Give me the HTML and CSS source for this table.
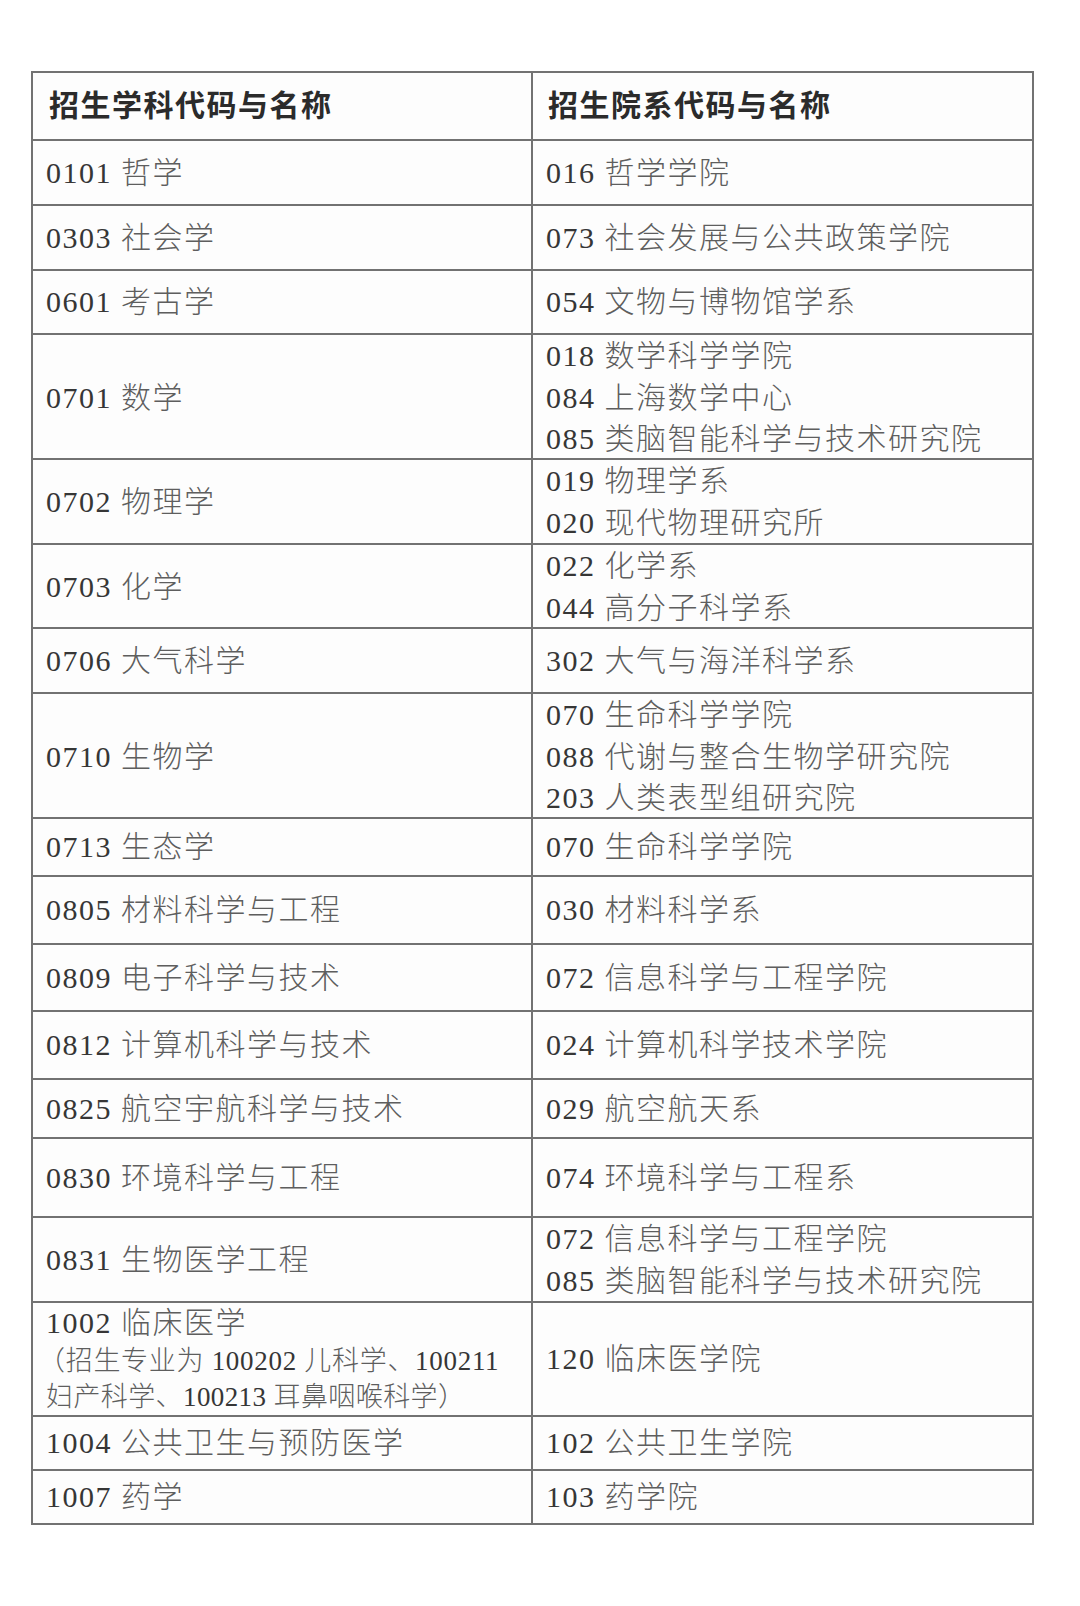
FILE: index.html
```html
<!DOCTYPE html>
<html lang="zh-CN">
<head>
<meta charset="utf-8">
<title>招生学科与院系</title>
<link rel="stylesheet" href="styles.css">
</head>
<body>
<div class="page">
  <div class="table">
    <div class="row head h66">
      <div class="cell left"><div class="line">招生学科代码与名称</div></div>
      <div class="cell right"><div class="line">招生院系代码与名称</div></div>
    </div>
    <div class="row h65">
      <div class="cell left"><div class="line"><span class="code">0101</span> 哲学</div></div>
      <div class="cell right"><div class="line"><span class="code">016</span> 哲学学院</div></div>
    </div>
    <div class="row h65">
      <div class="cell left"><div class="line"><span class="code">0303</span> 社会学</div></div>
      <div class="cell right"><div class="line"><span class="code">073</span> 社会发展与公共政策学院</div></div>
    </div>
    <div class="row h64">
      <div class="cell left"><div class="line"><span class="code">0601</span> 考古学</div></div>
      <div class="cell right"><div class="line"><span class="code">054</span> 文物与博物馆学系</div></div>
    </div>
    <div class="row h125">
      <div class="cell left"><div class="line"><span class="code">0701</span> 数学</div></div>
      <div class="cell right">
        <div class="line"><span class="code">018</span> 数学科学学院</div>
        <div class="line"><span class="code">084</span> 上海数学中心</div>
        <div class="line"><span class="code">085</span> 类脑智能科学与技术研究院</div>
      </div>
    </div>
    <div class="row h85">
      <div class="cell left"><div class="line"><span class="code">0702</span> 物理学</div></div>
      <div class="cell right">
        <div class="line"><span class="code">019</span> 物理学系</div>
        <div class="line"><span class="code">020</span> 现代物理研究所</div>
      </div>
    </div>
    <div class="row h84">
      <div class="cell left"><div class="line"><span class="code">0703</span> 化学</div></div>
      <div class="cell right">
        <div class="line"><span class="code">022</span> 化学系</div>
        <div class="line"><span class="code">044</span> 高分子科学系</div>
      </div>
    </div>
    <div class="row h65">
      <div class="cell left"><div class="line"><span class="code">0706</span> 大气科学</div></div>
      <div class="cell right"><div class="line"><span class="code">302</span> 大气与海洋科学系</div></div>
    </div>
    <div class="row h125">
      <div class="cell left"><div class="line"><span class="code">0710</span> 生物学</div></div>
      <div class="cell right">
        <div class="line"><span class="code">070</span> 生命科学学院</div>
        <div class="line"><span class="code">088</span> 代谢与整合生物学研究院</div>
        <div class="line"><span class="code">203</span> 人类表型组研究院</div>
      </div>
    </div>
    <div class="row h58">
      <div class="cell left"><div class="line"><span class="code">0713</span> 生态学</div></div>
      <div class="cell right"><div class="line"><span class="code">070</span> 生命科学学院</div></div>
    </div>
    <div class="row h68">
      <div class="cell left"><div class="line"><span class="code">0805</span> 材料科学与工程</div></div>
      <div class="cell right"><div class="line"><span class="code">030</span> 材料科学系</div></div>
    </div>
    <div class="row h67">
      <div class="cell left"><div class="line"><span class="code">0809</span> 电子科学与技术</div></div>
      <div class="cell right"><div class="line"><span class="code">072</span> 信息科学与工程学院</div></div>
    </div>
    <div class="row h68">
      <div class="cell left"><div class="line"><span class="code">0812</span> 计算机科学与技术</div></div>
      <div class="cell right"><div class="line"><span class="code">024</span> 计算机科学技术学院</div></div>
    </div>
    <div class="row h59">
      <div class="cell left"><div class="line"><span class="code">0825</span> 航空宇航科学与技术</div></div>
      <div class="cell right"><div class="line"><span class="code">029</span> 航空航天系</div></div>
    </div>
    <div class="row h79">
      <div class="cell left"><div class="line"><span class="code">0830</span> 环境科学与工程</div></div>
      <div class="cell right"><div class="line"><span class="code">074</span> 环境科学与工程系</div></div>
    </div>
    <div class="row h85">
      <div class="cell left"><div class="line"><span class="code">0831</span> 生物医学工程</div></div>
      <div class="cell right">
        <div class="line"><span class="code">072</span> 信息科学与工程学院</div>
        <div class="line"><span class="code">085</span> 类脑智能科学与技术研究院</div>
      </div>
    </div>
    <div class="row h114">
      <div class="cell left">
        <div class="line first"><span class="code">1002</span> 临床医学</div>
        <div class="line note indent">（招生专业为 <span class="code">100202</span> 儿科学、<span class="code">100211</span></div>
        <div class="line note">妇产科学、<span class="code">100213</span> 耳鼻咽喉科学）</div>
      </div>
      <div class="cell right"><div class="line"><span class="code">120</span> 临床医学院</div></div>
    </div>
    <div class="row h54">
      <div class="cell left"><div class="line"><span class="code">1004</span> 公共卫生与预防医学</div></div>
      <div class="cell right"><div class="line"><span class="code">102</span> 公共卫生学院</div></div>
    </div>
    <div class="row h54">
      <div class="cell left"><div class="line"><span class="code">1007</span> 药学</div></div>
      <div class="cell right"><div class="line"><span class="code">103</span> 药学院</div></div>
    </div>
  </div>
</div>
</body>
</html>
```

FILE: styles.css
```css
* {
  box-sizing: border-box;
}

html, body {
  margin: 0;
  padding: 0;
  background: #ffffff;
}

.page {
  padding: 71px 0 0 31px;
}

.table {
  width: 1003px;
  border: 2px solid #727272;
  background: #fdfdfd;
  font-family: "Liberation Serif", "Noto Sans CJK SC", serif;
  font-size: 30px;
  font-weight: 300;
  letter-spacing: 1.5px;
  color: #5e5e5e;
}

.code {
  color: #363636;
  font-weight: 400;
}

.row {
  display: grid;
  grid-template-columns: 498px 1fr;
  border-top: 2px solid #727272;
}

.row.head {
  border-top: none;
  font-size: 30px;
  font-weight: 700;
  color: #2b2b2b;
}

.cell {
  display: flex;
  flex-direction: column;
  justify-content: center;
  white-space: nowrap;
}

.line {
  line-height: 41.5px;
}

.cell.left {
  padding-left: 13px;
}

.cell.right {
  padding-left: 13px;
  border-left: 2px solid #727272;
}

.head .cell.left {
  padding-left: 16px;
}

.head .cell.right {
  padding-left: 15px;
}

.line.first {
  line-height: 40px;
}

.line.note {
  font-size: 27px;
  line-height: 36px;
  letter-spacing: 0.4px;
}

.line.note.indent {
  text-indent: -8px;
  letter-spacing: 0.7px;
}

.h54 { height: 54px; }
.h58 { height: 58px; }
.h59 { height: 59px; }
.h64 { height: 64px; }
.h65 { height: 65px; }
.h66 { height: 66px; }
.h67 { height: 67px; }
.h68 { height: 68px; }
.h79 { height: 79px; }
.h84 { height: 84px; }
.h85 { height: 85px; }
.h114 { height: 114px; }
.h125 { height: 125px; }
```
